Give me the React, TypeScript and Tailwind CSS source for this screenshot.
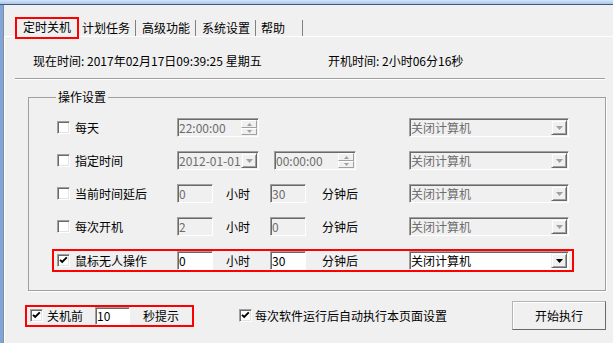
import type { ReactNode } from "react";

function Check({ checked }: { checked?: boolean }) {
  return (
    <span className="w-[13px] h-[13px] shrink-0 flex items-center justify-center bg-white border border-t-[#a0a0a0] border-l-[#a0a0a0] border-r-white border-b-white shadow-[inset_1px_1px_0_#696969,inset_-1px_-1px_0_#e3e3e3]">
      {checked && (
        <svg width="9" height="9" viewBox="0 0 9 9">
          <path d="M1 3.8l2.2 2.2L7.8 1.4" fill="none" stroke="#000" strokeWidth="1.9" />
        </svg>
      )}
    </span>
  );
}

function Arrow({ disabled }: { disabled?: boolean }) {
  return (
    <div className="w-[16px] h-[15px] shrink-0 flex items-center justify-center bg-[#f0f0f0] border border-t-[#f0f0f0] border-l-[#f0f0f0] border-r-[#696969] border-b-[#696969] shadow-[inset_1px_1px_0_#fff,inset_-1px_-1px_0_#a0a0a0]">
      <svg width="7" height="4" viewBox="0 0 7 4">
        <path d="M0 0h7L3.5 4z" fill={disabled ? "#a0a0a0" : "#000"} />
      </svg>
    </div>
  );
}

function Spin() {
  return (
    <div className="w-[16px] h-[15px] shrink-0 flex flex-col">
      <div className="h-[8px] flex items-center justify-center border border-t-white border-l-white border-r-[#a0a0a0] border-b-[#a0a0a0]">
        <svg width="5" height="3" viewBox="0 0 5 3">
          <path d="M2.5 0L5 3H0z" fill="#a0a0a0" />
        </svg>
      </div>
      <div className="h-[7px] flex items-center justify-center border border-t-white border-l-white border-r-[#a0a0a0] border-b-[#a0a0a0]">
        <svg width="5" height="3" viewBox="0 0 5 3">
          <path d="M0 0h5L2.5 3z" fill="#a0a0a0" />
        </svg>
      </div>
    </div>
  );
}

function Field({
  className,
  value,
  disabled,
  h = "h-[19px]",
  children,
}: {
  className: string;
  value: string;
  disabled?: boolean;
  h?: string;
  children?: ReactNode;
}) {
  return (
    <div
      className={`${className} ${h} shrink-0 flex items-center pl-px pr-px border border-t-[#a0a0a0] border-l-[#a0a0a0] border-r-white border-b-white shadow-[inset_1px_1px_0_#696969] ${
        disabled ? "bg-[#f0f0f0] text-[#6d6d6d]" : "bg-white text-black"
      }`}
    >
      <span className="flex-1 whitespace-nowrap">{value}</span>
      {children}
    </div>
  );
}

function Combo({ className, disabled }: { className: string; disabled?: boolean }) {
  return (
    <Field className={`${className} w-[160px]`} value="关闭计算机" disabled={disabled}>
      <Arrow disabled={disabled} />
    </Field>
  );
}

function RowHead({ label, checked }: { label: string; checked?: boolean }) {
  return (
    <div className="w-[123px] shrink-0 flex items-center pl-[3px]">
      <Check checked={checked} />
      <span className="ml-[5px]">{label}</span>
    </div>
  );
}

function DelayRow({
  label,
  hours,
  mins,
  active,
}: {
  label: string;
  hours: string;
  mins: string;
  active?: boolean;
}) {
  return (
    <div
      className={`w-[518px] h-[19px] flex items-center ${
        active ? "mt-px outline-2 outline-[#ff0000]" : ""
      }`}
    >
      <RowHead label={label} checked={active} />
      <Field className="w-[36px]" value={hours} disabled={!active} />
      <span className="ml-[13px]">小时</span>
      <Field className="ml-[20px] w-[36px]" value={mins} disabled={!active} />
      <span className="ml-[16px]">分钟后</span>
      <Combo className="ml-[51px]" disabled={!active} />
    </div>
  );
}

export default function App() {
  return (
    <div className="w-[613px] h-[343px] overflow-hidden bg-[#f0f0f0] flex flex-col font-['Noto_Sans_CJK_SC','Noto_Sans',sans-serif] text-[12px] leading-[16px] text-black">
      {/* window frame */}
      <div className="h-[4px] shrink-0 bg-gradient-to-b from-[#d6e5f7] to-[#a8c6ea]" />
      <div className="h-px shrink-0 bg-[#3c5a82]" />
      <div className="flex flex-1 min-h-0">
        <div className="w-[3px] shrink-0 bg-[#7ea6dc]" />
        <div className="w-px shrink-0 bg-[#8c8c8c]" />
        <div className="flex-1 flex flex-col">
          {/* Tabs */}
          <div className="mt-[12px] ml-[11px] h-[19px] flex items-start relative z-10">
            <div className="w-[64px] h-[22px] shrink-0 border-2 border-[#ff0000] pl-[6px] bg-[#f0f0f0]">
              定时关机
            </div>
            <div className="mt-[3px] h-[16px] pl-[3px] pr-[5px] border-r border-[#808080]">计划任务</div>
            <div className="mt-[3px] h-[16px] pl-[6px] pr-[5px] border-r border-[#808080]">高级功能</div>
            <div className="mt-[3px] h-[16px] pl-[6px] pr-[5px] border-r border-[#808080]">系统设置</div>
            <div className="mt-[3px] h-[16px] pl-[5px] pr-[17px] border-r border-[#808080]">帮助</div>
          </div>

          {/* Panel */}
          <div className="flex-1 flex flex-col border-t border-l border-white">
            <div className="mt-[16px] pl-[28px] flex whitespace-nowrap">
              <span className="w-[295px]">现在时间: 2017年02月17日09:39:25 星期五</span>
              <span>开机时间: 2小时06分16秒</span>
            </div>
            <div className="mt-[9px] ml-[10px] mr-[8px] h-[2px] border-t border-t-[#a0a0a0] border-b border-b-white" />

            {/* 操作设置 */}
            <fieldset className="mt-[9px] ml-[23px] mr-[7px] border border-[#a0a0a0] shadow-[1px_1px_0_#fff] pl-[25px] pb-[20px]">
              <legend className="ml-[2px] px-[2px] leading-[16px]">操作设置</legend>
              <div className="pt-[13px] flex flex-col gap-[14px]">
                <div className="h-[19px] flex items-center">
                  <RowHead label="每天" />
                  <Field className="w-[82px]" value="22:00:00" disabled>
                    <Spin />
                  </Field>
                  <Combo className="ml-[150px]" disabled />
                </div>
                <div className="h-[19px] flex items-center">
                  <RowHead label="指定时间" />
                  <Field className="w-[82px]" value="2012-01-01" disabled>
                    <Arrow disabled />
                  </Field>
                  <Field className="ml-[15px] w-[82px]" value="00:00:00" disabled>
                    <Spin />
                  </Field>
                  <Combo className="ml-[53px]" disabled />
                </div>
                <DelayRow label="当前时间延后" hours="0" mins="30" />
                <DelayRow label="每次开机" hours="2" mins="0" />
                <DelayRow label="鼠标无人操作" hours="0" mins="30" active />
              </div>
            </fieldset>

            {/* bottom */}
            <div className="mt-[10px] ml-[20px] mr-[7px] h-[29px] flex items-center whitespace-nowrap">
              <div className="h-[22px] border-2 border-[#ff0000] flex items-center pl-[3px] pr-[13px]">
                <Check checked />
                <span className="ml-[4px]">关机前</span>
                <Field className="ml-[12px] w-[35px]" h="h-[18px]" value="10" />
                <span className="ml-[13px]">秒提示</span>
              </div>
              <div className="ml-[45px] flex items-center">
                <Check checked />
                <span className="ml-[3px]">每次软件运行后自动执行本页面设置</span>
              </div>
              <button className="ml-auto w-[94px] h-[29px] bg-[#f0f0f0] border border-t-[#b4b4b4] border-l-[#b4b4b4] border-r-[#696969] border-b-[#696969] shadow-[inset_1px_1px_0_#fff]">
                开始执行
              </button>
            </div>
          </div>
        </div>
      </div>
    </div>
  );
}
